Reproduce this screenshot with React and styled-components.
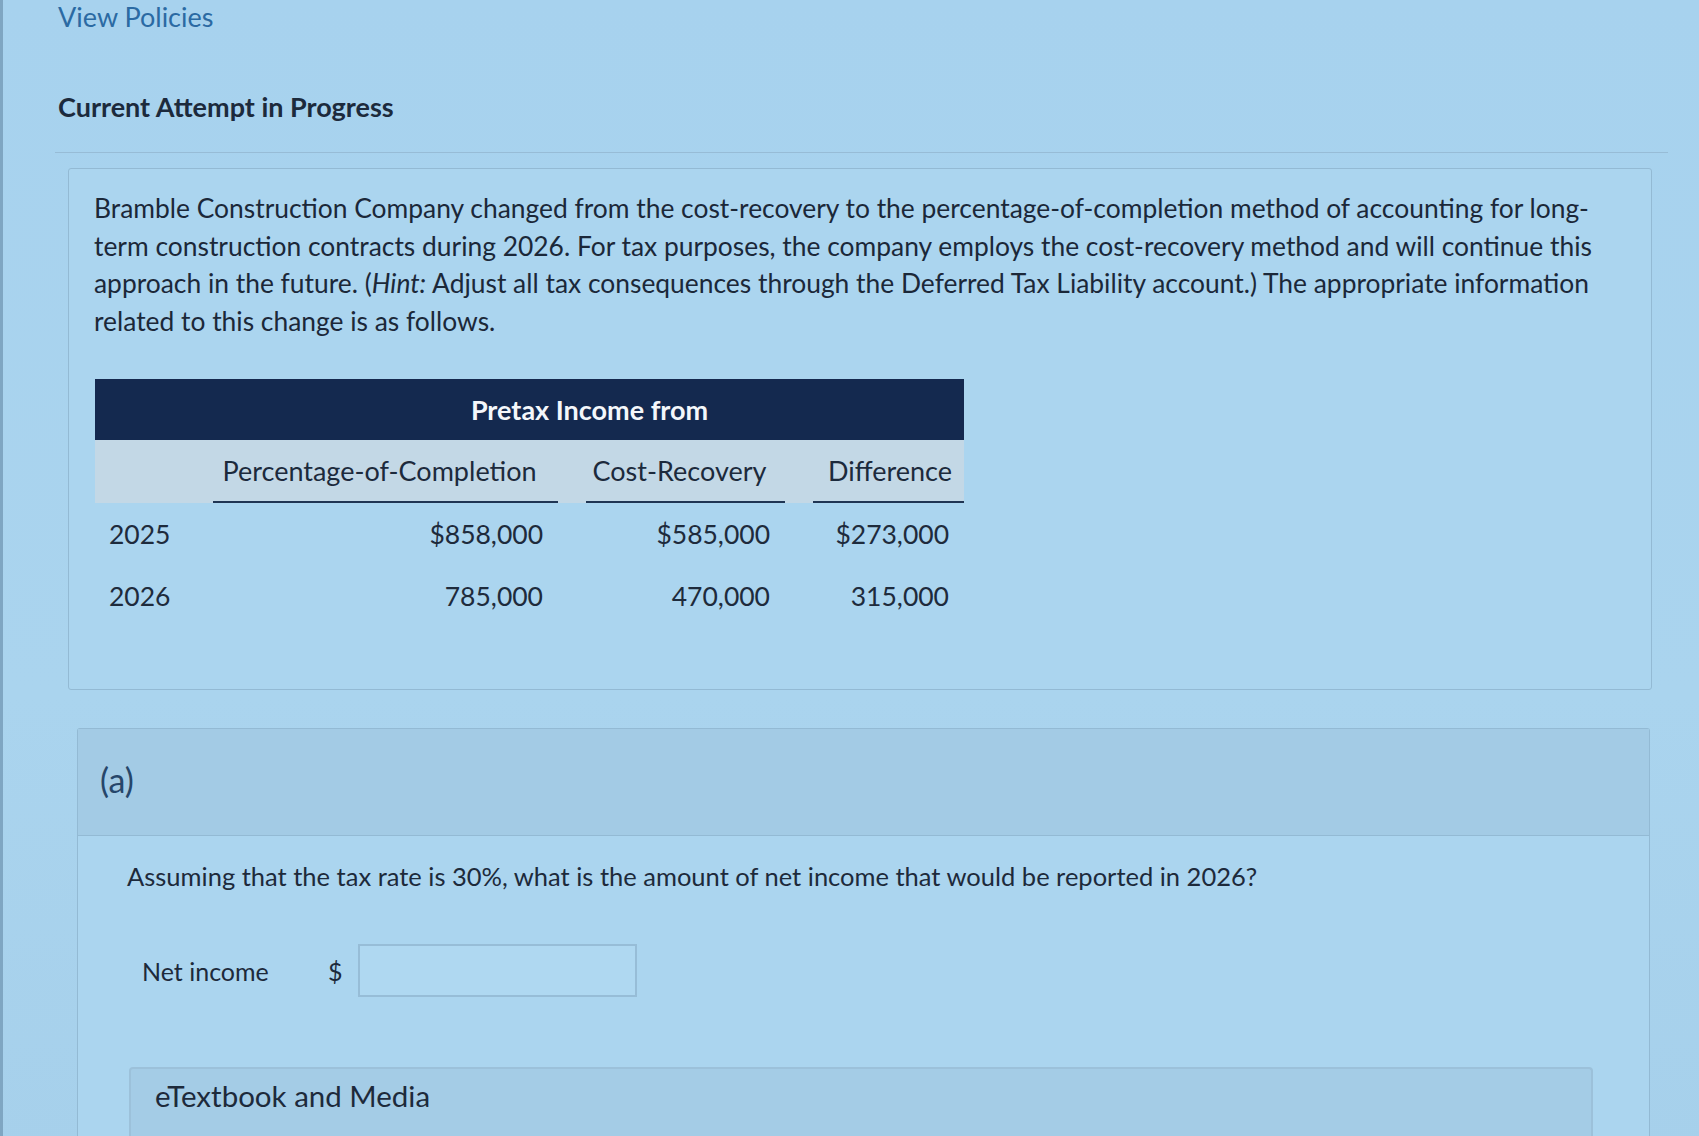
import React from 'react';
import styled, { createGlobalStyle } from 'styled-components';

const GlobalStyle = createGlobalStyle`
  html, body {
    margin: 0;
    padding: 0;
    background: #a9d3ee;
  }
  body {
    font-family: Lato, "Open Sans", sans-serif;
    color: #1c293a;
  }
`;

const Page = styled.div`
  min-height: 1136px;
  padding: 0 31px 0 55px;
  border-left: 3px solid #7fa6c2;
  box-sizing: border-box;
  background: linear-gradient(180deg, #a7d2ee 0%, #aad4ee 60%, #a6d0eb 100%);
  overflow: hidden;
`;

const PolicyLink = styled.a`
  display: block;
  padding-top: 2px;
  font-size: 27px;
  line-height: 30px;
  color: #2b6aa3;
  text-decoration: none;
`;

const Title = styled.h2`
  margin: 60px 0 0 0;
  font-size: 27px;
  line-height: 30px;
  font-weight: 700;
  color: #1c2a3c;
`;

const Divider = styled.hr`
  margin: 30px 0 15px -3px;
  border: none;
  border-top: 1px solid #97bcd6;
`;

const Card = styled.div`
  margin: 0 16px 0 10px;
  border: 1px solid #93bad4;
  border-radius: 3px;
  padding: 21px 24px 62px 25px;
  background: #abd5ef;
`;

const Paragraph = styled.p`
  margin: 0;
  font-size: 26.4px;
  line-height: 37.5px;
  color: #1b2839;
  max-width: 1510px;
`;

const Table = styled.div`
  margin: 39px 0 0 1px;
  width: 868px;
  display: grid;
  grid-template-columns: 90px 345px 199px 151px;
  column-gap: 28px;
`;

const TopHead = styled.div`
  grid-column: 1 / -1;
  height: 61px;
  background: #14294f;
  color: #f4f7fb;
  font-weight: 700;
  font-size: 27px;
  display: flex;
  align-items: center;
  justify-content: center;
  padding-left: 120px;
`;

const SubHeadBand = styled.div`
  grid-column: 1 / -1;
  display: grid;
  grid-template-columns: subgrid;
  background: #c3d8e6;
  height: 63px;
`;

const SubHead = styled.div`
  display: flex;
  align-items: center;
  justify-content: ${(p) => (p.$center ? 'center' : 'flex-end')};
  padding-right: 12px;
  font-size: 27px;
  color: #1c2a3c;
  border-bottom: ${(p) => (p.$blank ? 'none' : '2px solid #1f3553')};
`;

const Cell = styled.div`
  height: 62px;
  display: flex;
  align-items: center;
  justify-content: ${(p) => (p.$left ? 'flex-start' : 'flex-end')};
  padding: ${(p) => (p.$left ? '0 0 0 14px' : '0 15px 0 0')};
  font-size: 26.5px;
  color: #1e2b3c;
`;

const PartCard = styled.div`
  margin: 38px 18px 0 19px;
  border: 1px solid #93bad4;
  border-bottom: none;
  border-radius: 3px 3px 0 0;
`;

const PartHead = styled.div`
  height: 107px;
  box-sizing: border-box;
  display: flex;
  align-items: center;
  padding: 0 0 6px 22px;
  background: #a3cbe5;
  border-bottom: 1px solid #93bad4;
  font-size: 34px;
  color: #26466a;
`;

const PartBody = styled.div`
  padding: 25px 0 0 49px;
  background: #abd5ef;
`;

const Question = styled.p`
  margin: 0;
  font-size: 25.5px;
  line-height: 30px;
  color: #1d2a3b;
`;

const AnswerRow = styled.div`
  display: flex;
  align-items: center;
  margin-top: 53px;
  padding-left: 15px;
`;

const AnswerLabel = styled.span`
  font-size: 25px;
  color: #1d2a3b;
  width: 186px;
`;

const Dollar = styled.span`
  font-size: 25px;
  color: #1d2a3b;
  width: 30px;
`;

const AnswerInput = styled.input`
  width: 279px;
  height: 53px;
  box-sizing: border-box;
  border: 2px solid #97bdd7;
  background: #afd8f1;
  outline: none;
  font-family: inherit;
  font-size: 24px;
`;

const MediaBox = styled.div`
  margin: 70px 56px 0 2px;
  height: 90px;
  border: 2px solid #9cc1da;
  border-bottom: none;
  border-radius: 4px 4px 0 0;
  background: #a4cce6;
  padding: 9px 0 0 24px;
  box-sizing: border-box;
  font-size: 29.5px;
  color: #1d2a3b;
`;

const rows = [
  { year: '2025', poc: '$858,000', cr: '$585,000', diff: '$273,000' },
  { year: '2026', poc: '785,000', cr: '470,000', diff: '315,000' },
];

export default function App() {
  return (
    <>
      <GlobalStyle />
      <Page>
        <PolicyLink href="#">View Policies</PolicyLink>
        <Title>Current Attempt in Progress</Title>
        <Divider />

        <Card>
          <Paragraph>
            Bramble Construction Company changed from the cost-recovery to the percentage-of-completion method of
            accounting for long-term construction contracts during 2026. For tax purposes, the company employs the
            cost-recovery method and will continue this approach in the future. (<i>Hint:</i> Adjust all tax
            consequences through the Deferred Tax Liability account.) The appropriate information related to this
            change is as follows.
          </Paragraph>

          <Table>
            <TopHead>Pretax Income from</TopHead>
            <SubHeadBand>
              <SubHead $blank />
              <SubHead $center>Percentage-of-Completion</SubHead>
              <SubHead $center>Cost-Recovery</SubHead>
              <SubHead>Difference</SubHead>
            </SubHeadBand>
            {rows.map((r) => (
              <React.Fragment key={r.year}>
                <Cell $left>{r.year}</Cell>
                <Cell>{r.poc}</Cell>
                <Cell>{r.cr}</Cell>
                <Cell>{r.diff}</Cell>
              </React.Fragment>
            ))}
          </Table>
        </Card>

        <PartCard>
          <PartHead>(a)</PartHead>
          <PartBody>
            <Question>
              Assuming that the tax rate is 30%, what is the amount of net income that would be reported in 2026?
            </Question>
            <AnswerRow>
              <AnswerLabel>Net income</AnswerLabel>
              <Dollar>$</Dollar>
              <AnswerInput type="text" />
            </AnswerRow>
            <MediaBox>eTextbook and Media</MediaBox>
          </PartBody>
        </PartCard>
      </Page>
    </>
  );
}
